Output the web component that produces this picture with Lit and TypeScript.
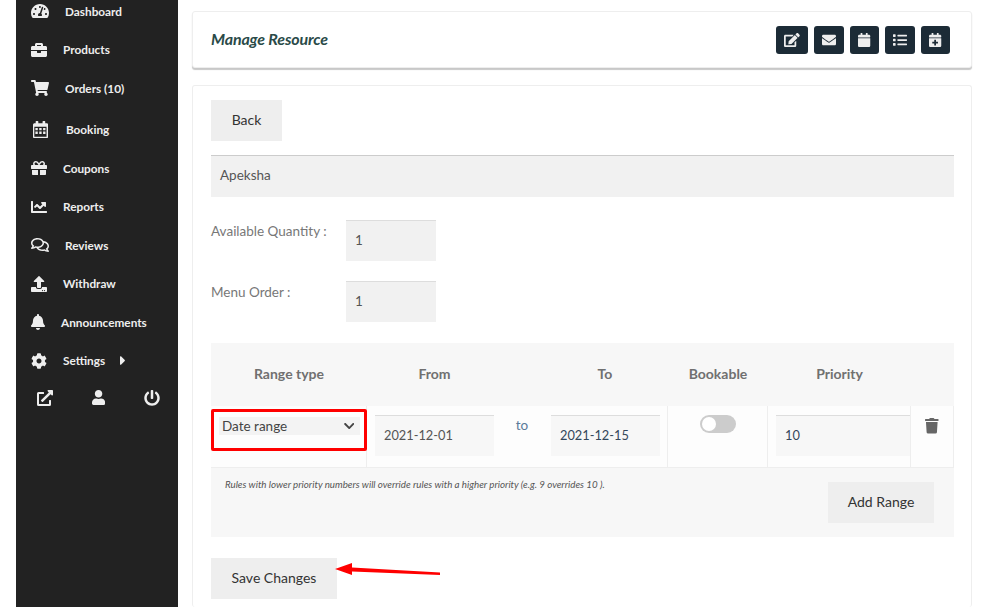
import { LitElement, html, css, svg } from "lit";
import { customElement } from "lit/decorators.js";

// font-awesome style glyphs: [viewBox width, path]
const ICONS: Record<string, [number, string]> = {
  dashboard: [576, "M288 32C128.94 32 0 160.94 0 320c0 52.8 14.25 102.26 39.06 144.8 5.61 9.62 16.3 15.2 27.44 15.2h443c11.14 0 21.83-5.58 27.44-15.2C561.75 422.26 576 372.8 576 320c0-159.06-128.94-288-288-288zm0 64c14.71 0 26.58 10.13 30.32 23.65-1.11 2.26-2.64 4.23-3.45 6.67l-9.22 27.67c-5.13 3.49-10.97 6.01-17.64 6.01-17.67 0-32-14.33-32-32S270.33 96 288 96zM96 384c-17.67 0-32-14.33-32-32s14.33-32 32-32 32 14.33 32 32-14.33 32-32 32zm48-160c-17.67 0-32-14.33-32-32s14.33-32 32-32 32 14.33 32 32-14.33 32-32 32zm246.77-72.41l-61.33 184C343.13 347.33 352 364.54 352 384c0 11.72-3.38 22.55-8.88 32H232.88c-5.5-9.45-8.88-20.28-8.88-32 0-33.94 26.5-61.43 59.9-63.59l61.34-184.01c4.17-12.56 17.73-19.45 30.36-15.17 12.57 4.19 19.35 17.79 15.17 30.36zm14.66 57.2l15.52-46.55c3.47-1.29 7.13-2.23 11.05-2.23 17.67 0 32 14.33 32 32s-14.33 32-32 32c-11.38-.01-20.89-6.28-26.57-15.22zM480 384c-17.67 0-32-14.33-32-32s14.33-32 32-32 32 14.33 32 32-14.33 32-32 32z"],
  products: [512, "M320 336c0 8.84-7.16 16-16 16h-96c-8.84 0-16-7.16-16-16v-48H0v144c0 25.6 22.4 48 48 48h416c25.6 0 48-22.4 48-48V288H320v48zm144-208h-80V80c0-25.6-22.4-48-48-48H176c-25.6 0-48 22.4-48 48v48H48c-25.6 0-48 22.4-48 48v80h512v-80c0-25.6-22.4-48-48-48zm-144 0H192V96h128v32z"],
  orders: [576, "M528.12 301.319l47.273-208C578.806 78.301 567.391 64 551.99 64H159.208l-9.166-44.81C147.758 8.021 137.93 0 126.529 0H24C10.745 0 0 10.745 0 24v16c0 13.255 10.745 24 24 24h69.883l70.248 343.435C147.325 417.1 136 435.222 136 456c0 30.928 25.072 56 56 56s56-25.072 56-56c0-15.674-6.447-29.835-16.824-40h209.647C430.447 426.165 424 440.326 424 456c0 30.928 25.072 56 56 56s56-25.072 56-56c0-22.172-12.888-41.332-31.579-50.405l5.517-24.276c3.413-15.018-8.002-29.319-23.403-29.319H218.117l-6.545-32h293.145c11.206 0 20.92-7.754 23.403-18.681z"],
  booking: [448, "M96 0h48c8 0 16 8 16 16v48h128V16c0-8 8-16 16-16h48c8 0 16 8 16 16v48h48c27 0 48 21 48 48v352c0 27-21 48-48 48H32c-17 0-32-15-32-32V112c0-27 21-48 48-48h32V16c0-8 8-16 16-16zM40 176v296h368V176H40zm32 32h72v72H72v-72zm116 0h72v72h-72v-72zm116 0h72v72h-72v-72zM72 316h72v72H72v-72zm116 0h72v72h-72v-72zm116 0h72v72h-72v-72z"],
  coupons: [512, "M32 448c0 17.7 14.3 32 32 32h160V320H32v128zm256 32h160c17.7 0 32-14.3 32-32V320H288v160zm192-320h-42.1c6.2-12.1 10.1-25.5 10.1-40 0-48.5-39.5-88-88-88-41.6 0-68.5 21.3-103 68.3-34.5-47-61.4-68.3-103-68.3-48.5 0-88 39.5-88 88 0 14.5 3.8 27.9 10.1 40H32c-17.7 0-32 14.3-32 32v80c0 8.8 7.2 16 16 16h480c8.8 0 16-7.2 16-16v-80c0-17.7-14.3-32-32-32zm-326.1 0c-22.1 0-40-17.9-40-40s17.9-40 40-40c19.9 0 34.6 3.3 86.1 80h-86.1zm206.1 0h-86.1c51.4-76.5 65.7-80 86.1-80 22.1 0 40 17.9 40 40s-17.9 40-40 40z"],
  reports: [512, "M496 384H64V80c0-8.84-7.16-16-16-16H16C7.16 64 0 71.16 0 80v336c0 17.67 14.33 32 32 32h464c8.84 0 16-7.16 16-16v-32c0-8.84-7.16-16-16-16zM464 96H345.94c-21.38 0-32.09 25.85-16.97 40.97l32.4 32.4L288 242.75l-73.37-73.37c-12.5-12.5-32.76-12.5-45.25 0l-68.69 68.69c-6.25 6.25-6.25 16.38 0 22.63l22.62 22.62c6.25 6.25 16.38 6.25 22.63 0L192 237.25l73.37 73.37c12.5 12.5 32.76 12.5 45.25 0l96-96 32.4 32.4c15.12 15.12 40.97 4.41 40.97-16.97V112c.01-8.84-7.15-16-15.99-16z"],
  reviews: [576, "M532 386.2c27.5-27.1 44-61.1 44-98.2 0-80-76.5-146.1-176.2-157.9C368.3 72.5 294.3 32 208 32 93.1 32 0 103.6 0 192c0 37 16.5 71 44 98.2-15.3 30.7-37.3 54.5-37.7 54.9-6.3 6.7-8.1 16.5-4.4 25 3.6 8.5 12 14 21.2 14 53.5 0 96.7-20.2 125.2-38.8 9.2 2.1 18.7 3.7 28.4 4.9C208.1 407.6 281.8 448 368 448c20.8 0 40.8-2.4 59.8-6.8C456.3 459.7 499.4 480 553 480c9.2 0 17.5-5.5 21.2-14 3.6-8.5 1.9-18.3-4.4-25-.4-.3-22.5-24.1-37.8-54.8zm-392.8-92.3L122.1 305c-14.1 9.1-28.5 16.3-43.1 21.4 2.7-4.7 5.4-9.7 8-14.8l15.5-31.1L77.7 256C64.2 242.6 48 220.7 48 192c0-60.7 73.3-112 160-112s160 51.3 160 112-73.3 112-160 112c-16.5 0-33-1.9-49-5.6l-19.8-4.5zM498.3 352l-24.7 24.4 15.5 31.1c2.6 5.1 5.3 10.1 8 14.8-14.6-5.1-29-12.3-43.1-21.4l-17.1-11.1-19.9 4.6c-16 3.7-32.5 5.6-49 5.6-54 0-102.2-20.1-131.3-49.7C338 339.5 416 272.9 416 192c0-3.4-.4-6.7-.7-10C479.7 196.5 528 238.8 528 288c0 28.7-16.2 50.6-29.7 64z"],
  withdraw: [512, "M296 384h-80c-13.3 0-24-10.7-24-24V192h-87.7c-17.8 0-26.7-21.5-14.1-34.1L242.3 5.7c7.5-7.5 19.8-7.5 27.3 0l152.2 152.2c12.6 12.6 3.7 34.1-14.1 34.1H320v168c0 13.3-10.7 24-24 24zm216-8v112c0 13.3-10.7 24-24 24H24c-13.3 0-24-10.7-24-24V376c0-13.3 10.7-24 24-24h136v8c0 30.9 25.1 56 56 56h80c30.9 0 56-25.1 56-56v-8h136c13.3 0 24 10.7 24 24zm-124 88c0-11-9-20-20-20s-20 9-20 20 9 20 20 20 20-9 20-20zm64 0c0-11-9-20-20-20s-20 9-20 20 9 20 20 20 20-9 20-20z"],
  bell: [448, "M224 512c35.32 0 63.97-28.65 63.97-64H160.03c0 35.35 28.65 64 63.97 64zm215.39-149.71c-19.32-20.76-55.47-51.99-55.47-154.29 0-77.7-54.48-139.9-127.94-155.16V32c0-17.67-14.32-32-31.98-32s-31.98 14.33-31.98 32v20.84C118.56 68.1 64.08 130.3 64.08 208c0 102.3-36.15 133.53-55.47 154.29-6 6.45-8.66 14.16-8.61 21.71.11 16.4 12.98 32 32.1 32h383.8c19.12 0 32-15.6 32.1-32 .05-7.55-2.61-15.27-8.61-21.71z"],
  cog: [512, "M487.4 315.7l-42.6-24.6c4.3-23.2 4.3-47 0-70.2l42.6-24.6c4.9-2.8 7.1-8.6 5.5-14-11.1-35.6-30-67.8-54.7-94.6-3.8-4.1-10-5.1-14.8-2.3L380.8 110c-17.9-15.4-38.5-27.3-60.8-35.1V25.8c0-5.6-3.9-10.5-9.4-11.7-36.7-8.2-74.3-7.8-109.2 0-5.5 1.2-9.4 6.1-9.4 11.7V75c-22.2 7.9-42.8 19.8-60.8 35.1L88.7 85.5c-4.9-2.8-11-1.9-14.8 2.3-24.7 26.7-43.6 58.9-54.7 94.6-1.7 5.4.6 11.2 5.5 14L67.3 221c-4.3 23.2-4.3 47 0 70.2l-42.6 24.6c-4.9 2.8-7.1 8.6-5.5 14 11.1 35.6 30 67.8 54.7 94.6 3.8 4.1 10 5.1 14.8 2.3l42.6-24.6c17.9 15.4 38.5 27.3 60.8 35.1v49.2c0 5.6 3.9 10.5 9.4 11.7 36.7 8.2 74.3 7.8 109.2 0 5.5-1.2 9.4-6.1 9.4-11.7v-49.2c22.2-7.9 42.8-19.8 60.8-35.1l42.6 24.6c4.9 2.8 11 1.9 14.8-2.3 24.7-26.7 43.6-58.9 54.7-94.6 1.5-5.5-.7-11.3-5.6-14.1zM256 336c-44.1 0-80-35.9-80-80s35.9-80 80-80 80 35.9 80 80-35.9 80-80 80z"],
  caret: [192, "M0 384.662V127.338c0-17.818 21.543-26.741 34.142-14.142l128.662 128.662c7.81 7.81 7.81 20.474 0 28.284L34.142 398.804C21.543 411.404 0 402.48 0 384.662z"],
  external: [512, "M432,320H400a16,16,0,0,0-16,16V448H64V128H208a16,16,0,0,0,16-16V80a16,16,0,0,0-16-16H48A48,48,0,0,0,0,112V464a48,48,0,0,0,48,48H400a48,48,0,0,0,48-48V336A16,16,0,0,0,432,320ZM488,0h-128c-21.37,0-32.05,25.91-17,41l35.73,35.73L135,320.37a24,24,0,0,0,0,34L157.67,377a24,24,0,0,0,34,0L435.28,133.32,471,169c15,15,41,4.5,41-17V24A24,24,0,0,0,488,0Z"],
  user: [448, "M224 256c70.7 0 128-57.3 128-128S294.7 0 224 0 96 57.3 96 128s57.3 128 128 128zm89.6 32h-16.7c-22.2 10.2-46.9 16-72.9 16s-50.6-5.8-72.9-16h-16.7C60.2 288 0 348.2 0 422.4V464c0 26.5 21.5 48 48 48h352c26.5 0 48-21.5 48-48v-41.6c0-74.2-60.2-134.4-134.4-134.4z"],
  power: [512, "M400 54.1c63 45 104 118.6 104 201.9 0 136.8-110.8 247.7-247.5 248C120 504.3 8.2 393 8 256.4 7.9 173.1 48.9 99.3 111.8 54.2c11.7-8.3 28-4.8 35 7.7L162.6 90c5.9 10.5 3.1 23.8-6.6 31-41.5 30.8-68 79.6-68 134.9-.1 92.3 74.5 168.1 168 168.1 91.6 0 168.6-74.2 168-169.1-.3-51.8-24.7-101.8-68.1-134-9.7-7.2-12.4-20.5-6.4-30.9l15.8-28.1c7-12.4 23.2-16.1 34.8-7.9zM296 264V24c0-13.3-10.7-24-24-24h-32c-13.3 0-24 10.7-24 24v240c0 13.3 10.7 24 24 24h32c13.3 0 24-10.7 24-24z"],
  edit: [576, "M402.6 83.2l90.2 90.2c3.8 3.8 3.8 10 0 13.8L274.4 405.6l-92.8 10.3c-12.4 1.4-22.9-9.1-21.5-21.5l10.3-92.8L388.8 83.2c3.8-3.8 10-3.8 13.8 0zm162-22.9l-48.8-48.8c-15.2-15.2-39.9-15.2-55.2 0l-35.4 35.4c-3.8 3.8-3.8 10 0 13.8l90.2 90.2c3.8 3.8 10 3.8 13.8 0l35.4-35.4c15.2-15.3 15.2-40 0-55.2zM384 346.2V448H64V128h229.8c3.2 0 6.2-1.3 8.5-3.5l40-40c7.6-7.6 2.2-20.5-8.5-20.5H48C21.5 64 0 85.5 0 112v352c0 26.5 21.5 48 48 48h352c26.5 0 48-21.5 48-48V306.2c0-10.7-12.9-16-20.5-8.5l-40 40c-2.2 2.3-3.5 5.3-3.5 8.5z"],
  envelope: [512, "M502.3 190.8c3.9-3.1 9.7-.2 9.7 4.7V400c0 26.5-21.5 48-48 48H48c-26.5 0-48-21.5-48-48V195.6c0-5 5.7-7.8 9.7-4.7 22.4 17.4 52.1 39.5 154.1 113.6 21.1 15.4 56.7 47.8 92.2 47.6 35.7.3 72-32.8 92.3-47.6 102-74.1 131.6-96.3 154-113.7zM256 320c23.2.4 56.6-29.2 73.4-41.4 132.7-96.3 142.8-104.7 173.4-128.7 5.8-4.5 9.2-11.5 9.2-18.9v-19c0-26.5-21.5-48-48-48H48C21.5 64 0 85.5 0 112v19c0 7.4 3.4 14.3 9.2 18.9 30.6 23.9 40.7 32.4 173.4 128.7 16.8 12.2 50.2 41.8 73.4 41.4z"],
  calendar: [448, "M12 192h424c6.6 0 12 5.4 12 12v260c0 26.5-21.5 48-48 48H48c-26.5 0-48-21.5-48-48V204c0-6.6 5.4-12 12-12zm436-44v-36c0-26.5-21.5-48-48-48h-48V12c0-6.6-5.4-12-12-12h-40c-6.6 0-12 5.4-12 12v52H160V12c0-6.6-5.4-12-12-12h-40c-6.6 0-12 5.4-12 12v52H48C21.5 64 0 85.5 0 112v36c0 6.6 5.4 12 12 12h424c6.6 0 12-5.4 12-12z"],
  list: [512, "M80 368H16a16 16 0 0 0-16 16v64a16 16 0 0 0 16 16h64a16 16 0 0 0 16-16v-64a16 16 0 0 0-16-16zm0-320H16A16 16 0 0 0 0 64v64a16 16 0 0 0 16 16h64a16 16 0 0 0 16-16V64a16 16 0 0 0-16-16zm0 160H16a16 16 0 0 0-16 16v64a16 16 0 0 0 16 16h64a16 16 0 0 0 16-16v-64a16 16 0 0 0-16-16zm416 176H176a16 16 0 0 0-16 16v32a16 16 0 0 0 16 16h320a16 16 0 0 0 16-16v-32a16 16 0 0 0-16-16zm0-320H176a16 16 0 0 0-16 16v32a16 16 0 0 0 16 16h320a16 16 0 0 0 16-16V80a16 16 0 0 0-16-16zm0 160H176a16 16 0 0 0-16 16v32a16 16 0 0 0 16 16h320a16 16 0 0 0 16-16v-32a16 16 0 0 0-16-16z"],
  calendarPlus: [448, "M436 160H12c-6.6 0-12-5.4-12-12v-36c0-26.5 21.5-48 48-48h48V12c0-6.6 5.4-12 12-12h40c6.6 0 12 5.4 12 12v52h128V12c0-6.6 5.4-12 12-12h40c6.6 0 12 5.4 12 12v52h48c26.5 0 48 21.5 48 48v36c0 6.6-5.4 12-12 12zM12 192h424c6.6 0 12 5.4 12 12v260c0 26.5-21.5 48-48 48H48c-26.5 0-48-21.5-48-48V204c0-6.6 5.4-12 12-12zm316 140c0-6.6-5.4-12-12-12h-60v-60c0-6.6-5.4-12-12-12h-40c-6.6 0-12 5.4-12 12v60h-60c-6.6 0-12 5.4-12 12v40c0 6.6 5.4 12 12 12h60v60c0 6.6 5.4 12 12 12h40c6.6 0 12-5.4 12-12v-60h60c6.6 0 12-5.4 12-12v-40z"],
  trash: [448, "M432 32H312l-9.4-18.7A24 24 0 0 0 281.1 0H166.8a23.72 23.72 0 0 0-21.4 13.3L136 32H16A16 16 0 0 0 0 48v32a16 16 0 0 0 16 16h416a16 16 0 0 0 16-16V48a16 16 0 0 0-16-16zM53.2 467a48 48 0 0 0 47.9 45h245.8a48 48 0 0 0 47.9-45L416 128H32z"],
  chevron: [448, "M207.029 381.476L12.686 187.132c-9.373-9.373-9.373-24.569 0-33.941l22.667-22.667c9.357-9.357 24.522-9.375 33.901-.04L224 284.505l154.745-154.021c9.379-9.335 24.544-9.317 33.901.04l22.667 22.667c9.373 9.373 9.373 24.569 0 33.941L240.971 381.476c-9.373 9.372-24.569 9.372-33.942 0z"],
};

// size is the em height, the width follows from the glyph's box
function icon(name: string, size = 16) {
  const [w, d] = ICONS[name];
  return html`<svg
    class="ic"
    width=${(w / 512) * size}
    height=${size}
    viewBox="0 0 ${w} 512"
    fill="currentColor"
  >
    ${svg`<path d=${d}></path>`}
  </svg>`;
}

const NAV = [
  { icon: "dashboard", label: "Dashboard" },
  { icon: "products", label: "Products" },
  { icon: "orders", label: "Orders (10)" },
  { icon: "booking", label: "Booking", cls: "booking", size: 17 },
  { icon: "coupons", label: "Coupons" },
  { icon: "reports", label: "Reports" },
  { icon: "reviews", label: "Reviews" },
  { icon: "withdraw", label: "Withdraw" },
  { icon: "bell", label: "Announcements" },
  { icon: "cog", label: "Settings", caret: true },
];

@customElement("app-root")
export class AppRoot extends LitElement {
  static styles = css`
    :host {
      display: flex;
      height: 607px;
      overflow: hidden;
      background: #fff;
      font-family: Lato, "Noto Sans", sans-serif;
      font-size: 14px;
      color: #666;
    }
    .ic {
      display: block;
      flex: none;
    }

    /* sidebar */
    .sidebar {
      flex: none;
      width: 162px;
      margin-left: 16px;
      background: #222;
      color: #eee;
    }
    .nav {
      margin-top: -8px;
    }
    .item {
      display: flex;
      align-items: center;
      gap: 16px;
      height: 38.5px;
      padding-left: 15px;
      font-size: 11.8px;
      font-weight: 700;
    }
    .item.booking {
      margin-top: 3px;
    }
    .item.booking .ic {
      margin: 0 2px 0 2px;
    }
    .caret {
      margin-left: -1px;
    }
    .tools {
      display: flex;
      justify-content: space-between;
      padding: 10px 18px 0 21px;
    }

    /* main column */
    .main {
      flex: none;
      width: 780px;
      margin-left: 14px;
      padding-top: 11px;
      display: flex;
      flex-direction: column;
      gap: 17px;
    }
    .panel {
      background: #fff;
      border: 1px solid #eee;
      border-radius: 3px;
    }
    .head {
      flex: none;
      height: 57px;
      box-sizing: border-box;
      display: flex;
      align-items: center;
      justify-content: space-between;
      padding: 0 21px 0 18px;
      box-shadow: 0 2px 1px #c8c8c8;
    }
    .head h1 {
      margin: 0 0 2px;
      font-size: 16px;
      font-style: italic;
      font-weight: 700;
      letter-spacing: -0.14px;
      color: #2a4a48;
    }
    .actions {
      display: flex;
      gap: 6px;
    }
    .act {
      height: 28px;
      min-width: 29px;
      padding: 0 8px;
      box-sizing: border-box;
      display: flex;
      align-items: center;
      justify-content: center;
      border-radius: 3px;
      background: #1c2b36;
      color: #eee;
    }

    .body {
      flex: 1;
      padding: 14px 18px 0;
      border-bottom: none;
    }
    .btn {
      display: flex;
      align-items: center;
      justify-content: center;
      height: 41px;
      box-sizing: border-box;
      padding-bottom: 2px;
      background: #eee;
      color: #333;
      font-size: 14px;
    }
    .btn.back {
      width: 71px;
    }
    .btn.add {
      width: 106px;
      margin-top: 4px;
    }
    .btn.save {
      width: 126px;
    }
    .field {
      box-sizing: border-box;
      height: 41px;
      display: flex;
      align-items: center;
      background: #f1f1f1;
      border-top: 1px solid #ccc;
      padding: 0 0 2px 9px;
      color: #555;
      font-size: 13.5px;
    }
    .name {
      width: 743px;
      margin-top: 14px;
      height: 42px;
      padding-bottom: 4px;
    }
    .qty {
      display: grid;
      grid-template-columns: 135px 90px;
      row-gap: 20px;
      margin-top: 23px;
    }
    .qty label {
      padding-top: 3px;
      color: #777;
      font-size: 13.5px;
    }
    .qty .field {
      border-top-color: #ddd;
    }

    /* ranges table */
    .ranges {
      width: 743px;
      margin-top: 21px;
      background: #f7f7f7;
    }
    .cols {
      display: grid;
      grid-template-columns: 156px 135px 40px 126px 100px 143px 43px;
    }
    .cols.titles {
      height: 63px;
      box-sizing: border-box;
      padding-bottom: 2px;
      align-items: center;
      text-align: center;
      font-size: 14px;
      font-weight: 700;
      color: #707070;
    }
    .cols.row {
      height: 62px;
      box-sizing: border-box;
      background: #fdfdfd;
      border-bottom: 1px solid #eee;
      border-right: 1px solid #eee;
    }
    .cell {
      box-sizing: border-box;
      padding: 9px 0 0 8px;
    }
    .cell.sep {
      border-right: 1px solid #eee;
    }
    .cell .field {
      background: #f7f7f7;
      border-top-color: #ddd;
      font-size: 12.8px;
    }
    .from-input {
      width: 119px;
    }
    .cell.date-to {
      padding-left: 9px;
    }
    .to-input {
      width: 109px;
    }
    .cell.first {
      padding: 3px 0 0;
      border-right: 1px solid #eee;
    }
    .marked {
      width: 156px;
      height: 42px;
      box-sizing: border-box;
      border: 3px solid #f00;
      border-radius: 2px;
      padding: 5px 4px 0 5px;
    }
    .select {
      display: flex;
      align-items: center;
      justify-content: space-between;
      height: 18px;
      padding: 0 6px 0 3px;
      background: #f3f3f3;
      color: #444;
      font-size: 13.5px;
    }
    .to {
      padding: 11px 0 0;
      text-align: center;
      color: #5a7a9a;
      font-size: 13.5px;
    }
    .cell .field.blue {
      color: #33475b;
    }
    .toggle {
      width: 36px;
      height: 18px;
      margin: 0 auto;
      border-radius: 9px;
      background: #ccc;
      display: flex;
      align-items: center;
      padding-left: 2px;
      box-sizing: border-box;
    }
    .toggle i {
      width: 14px;
      height: 14px;
      border-radius: 50%;
      background: #fff;
    }
    .cell.center {
      padding-left: 0;
    }
    .trash {
      padding: 12px 0 0 14px;
      color: #666;
    }
    .foot {
      height: 69px;
      box-sizing: border-box;
      display: flex;
      justify-content: space-between;
      padding: 10px 20px 0 14px;
    }
    .foot small {
      font-size: 9.75px;
      font-style: italic;
      color: #555;
    }

    .save-row {
      position: relative;
      margin-top: 21px;
    }
    .arrow {
      position: absolute;
      left: 123px;
      top: 3px;
    }
  `;

  render() {
    return html`
      <aside class="sidebar">
        <nav class="nav">
          ${NAV.map(
            (n) => html`<div class="item ${n.cls ?? ""}">
              ${icon(n.icon, n.size ?? 16)}
              <span>${n.label}</span>
              ${n.caret
                ? html`<span class="caret">${icon("caret", 15)}</span>`
                : ""}
            </div>`
          )}
        </nav>
        <div class="tools">
          ${icon("external")} ${icon("user", 15)} ${icon("power")}
        </div>
      </aside>

      <main class="main">
        <section class="panel head">
          <h1>Manage Resource</h1>
          <div class="actions">
            <div class="act">${icon("edit", 14)}</div>
            <div class="act">${icon("envelope", 14)}</div>
            <div class="act">${icon("calendar", 14)}</div>
            <div class="act">${icon("list", 14)}</div>
            <div class="act">${icon("calendarPlus", 14)}</div>
          </div>
        </section>

        <section class="panel body">
          <div class="btn back">Back</div>
          <div class="field name">Apeksha</div>

          <div class="qty">
            <label>Available Quantity :</label>
            <div class="field">1</div>
            <label>Menu Order :</label>
            <div class="field">1</div>
          </div>

          <div class="ranges">
            <div class="cols titles">
              <span>Range type</span>
              <span>From</span>
              <span></span>
              <span>To</span>
              <span>Bookable</span>
              <span>Priority</span>
              <span></span>
            </div>
            <div class="cols row">
              <div class="cell first">
                <div class="marked">
                  <div class="select">Date range ${icon("chevron", 12)}</div>
                </div>
              </div>
              <div class="cell">
                <div class="field from-input">2021-12-01</div>
              </div>
              <div class="to">to</div>
              <div class="cell sep date-to">
                <div class="field blue to-input">2021-12-15</div>
              </div>
              <div class="cell sep center">
                <div class="toggle"><i></i></div>
              </div>
              <div class="cell sep">
                <div class="field blue">10</div>
              </div>
              <div class="trash">${icon("trash", 15.5)}</div>
            </div>
            <div class="foot">
              <small
                >Rules with lower priority numbers will override rules with a
                higher priority (e.g. 9 overrides 10 ).</small
              >
              <div class="btn add">Add Range</div>
            </div>
          </div>

          <div class="save-row">
            <div class="btn save">Save Changes</div>
            <svg class="arrow" width="110" height="16" viewBox="0 0 110 16">
              <path
                d="M1 8 L18 2 L18 6.6 L106 11.4 L106 14 L18 10.6 L18 14 Z"
                fill="#f00"
              ></path>
            </svg>
          </div>
        </section>
      </main>
    `;
  }
}
